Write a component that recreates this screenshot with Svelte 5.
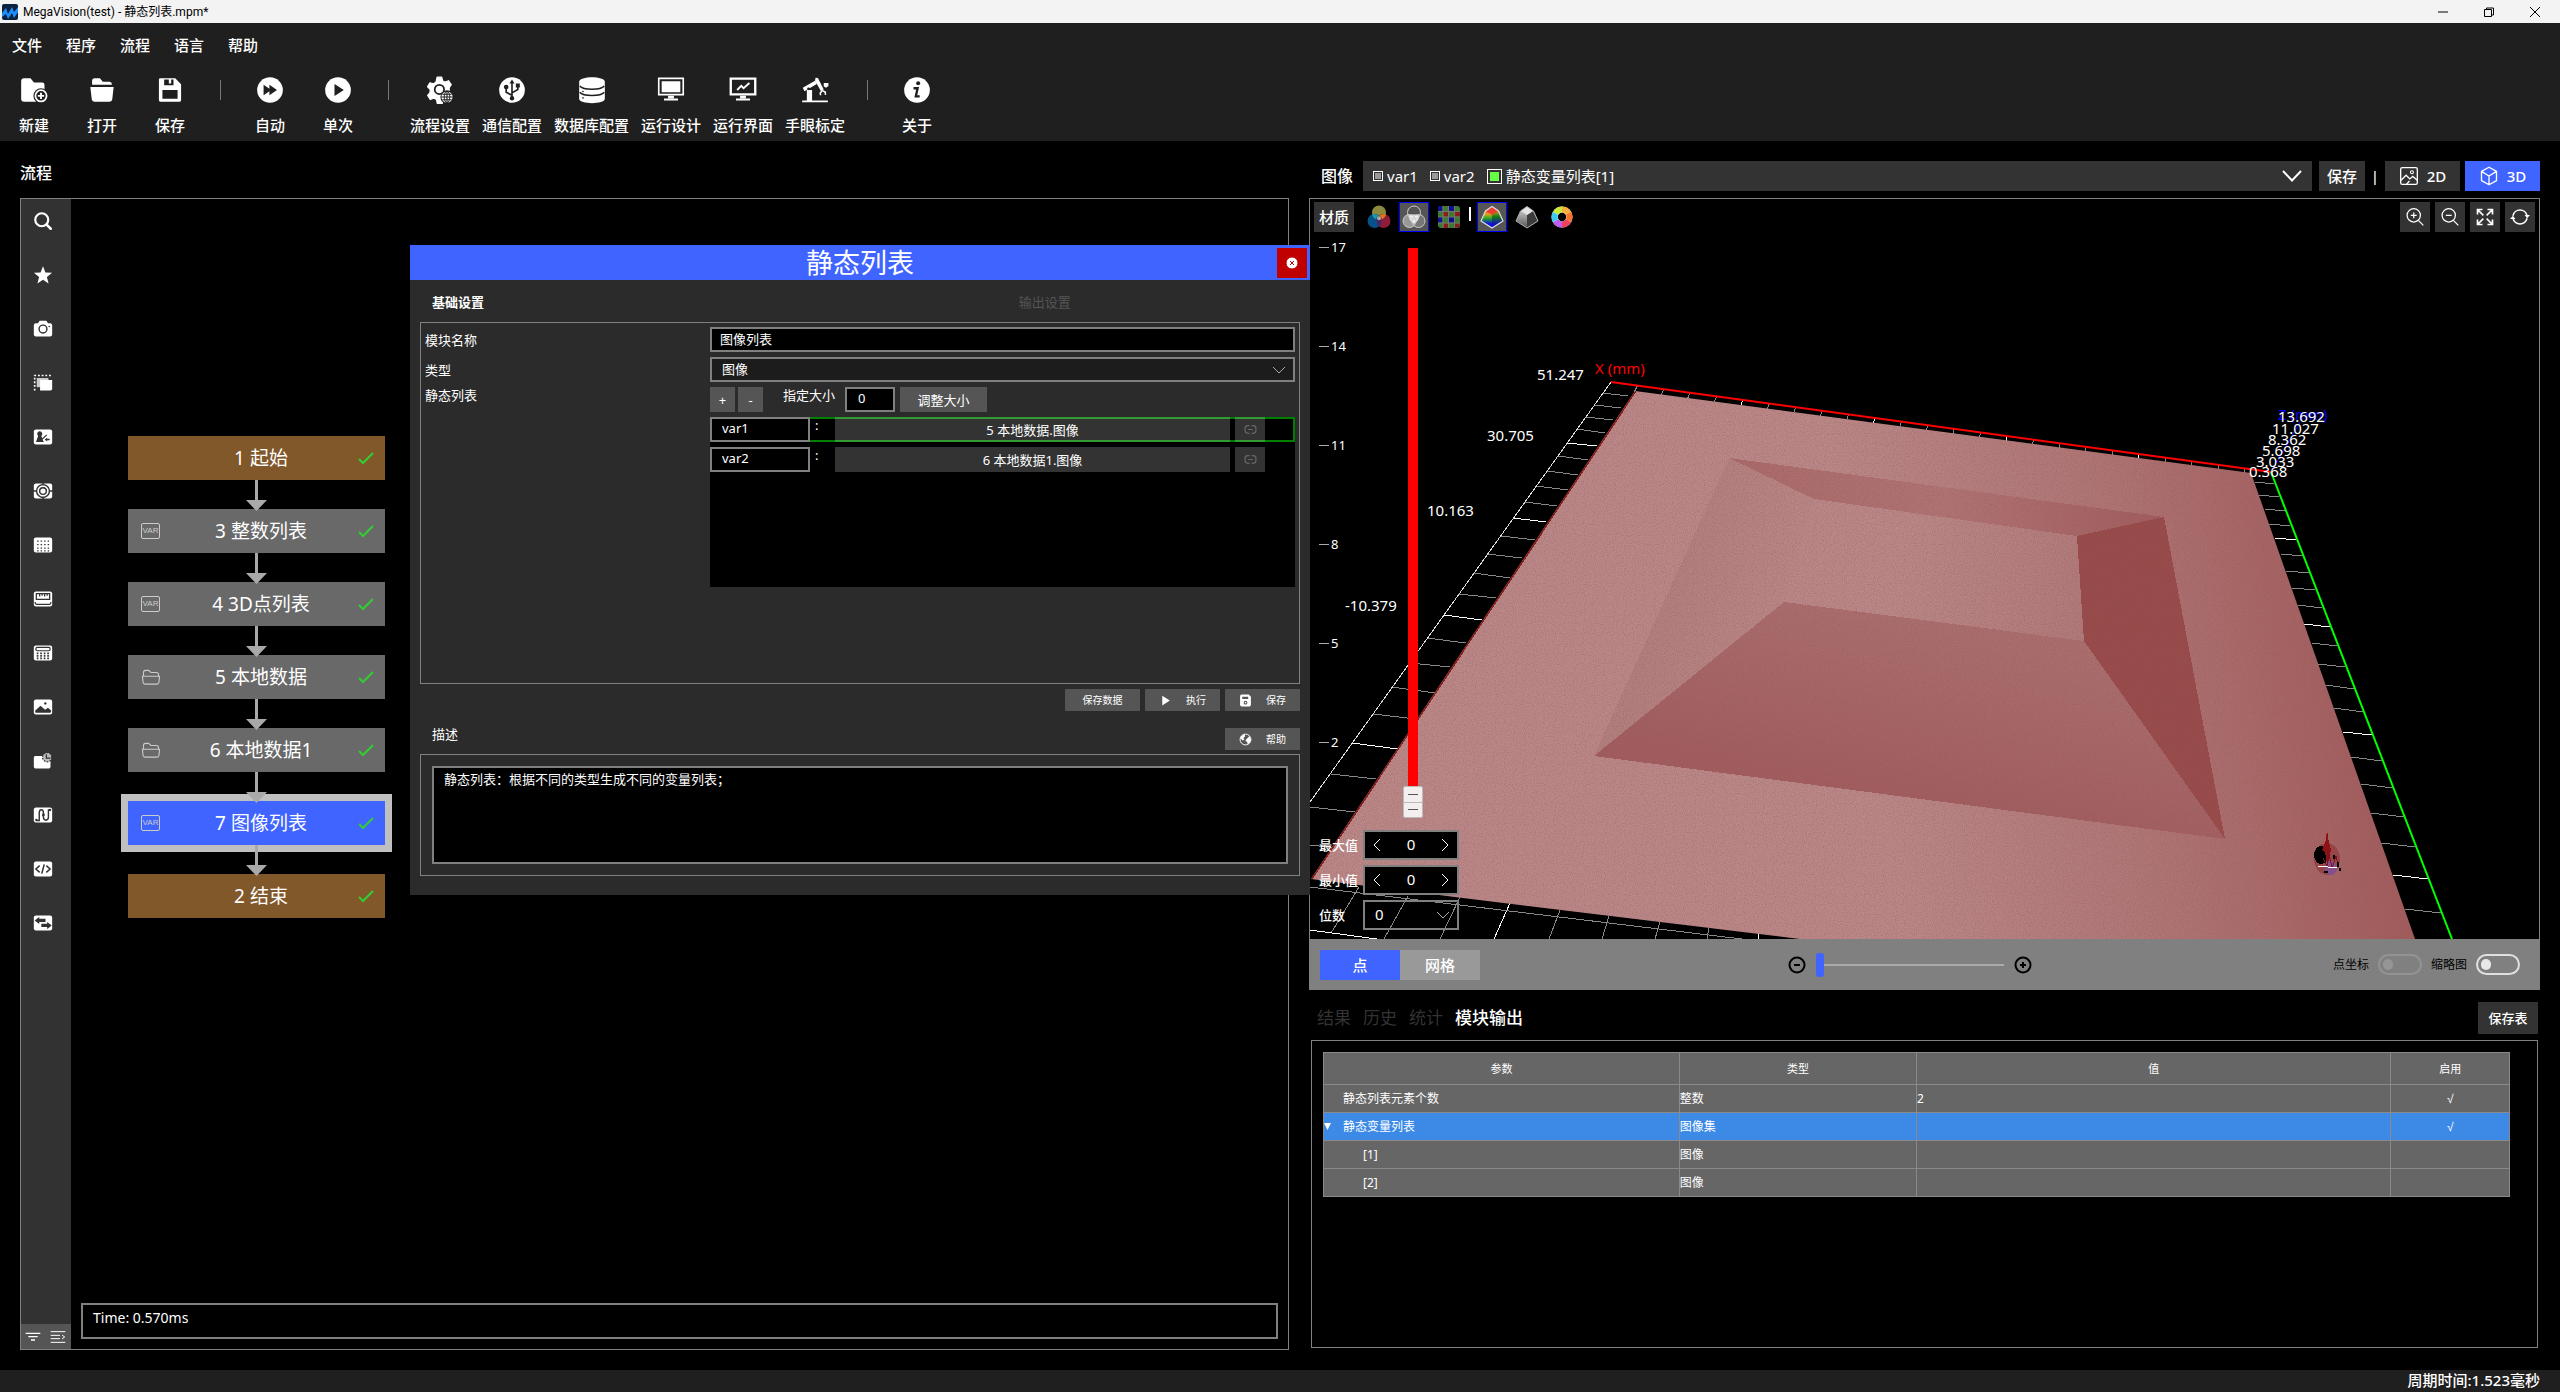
<script>
    // 24x24 glyphs, drawn with currentColor; darker details use the colour behind the icon
    const icons = {
        newProject: '<path fill="currentColor" d="M1 4.5A2.5 2.5 0 0 1 3.500 2H9l3 3.500h7a2 2 0 0 1 2 2V22H3.500A2.500 2.500 0 0 1 1 19.500z"/><circle cx="18" cy="17" r="6.500" fill="#1f1f1f"/><circle cx="18" cy="17" r="4.800" fill="none" stroke="currentColor" stroke-width="1.500"/><path stroke="currentColor" stroke-width="1.600" d="M18 14.300v5.400M15.300 17h5.400"/>',
        open: '<path fill="currentColor" d="M3.500 7.500V4.300A2.300 2.300 0 0 1 5.800 2h4.400l2.500 3H18a2.500 2.500 0 0 1 2.500 2.500zM2 9.500h20L20.800 20a2.200 2.200 0 0 1-2.200 2H5.400a2.200 2.200 0 0 1-2.200-2z"/>',
        save: '<path fill="currentColor" fill-rule="evenodd" d="M2.500 3.200A1.200 1.200 0 0 1 3.700 2h12.800l5 5v13.800a1.200 1.200 0 0 1-1.200 1.200H3.700a1.200 1.200 0 0 1-1.200-1.200zM7 3v5h8V3h-2v3.500h-2V3zM5.500 12v7.500h13V12z"/>',
        auto: '<circle cx="12" cy="12" r="11" fill="currentColor"/><path fill="#1f1f1f" d="M6.500 7.500v9l5-3.500v3.500L18 12l-6.500-4.500V11z"/>',
        once: '<circle cx="12" cy="12" r="11" fill="currentColor"/><path fill="#1f1f1f" d="M9 6.800v10.400L17 12z"/>',
        flowSet: '<path fill="currentColor" d="M9.500 1h4l.8 3.200 2 1 3-1.200 2.400 3.500-1.900 2.600.2 2.200-5.500 4-.5 7.200H9.600L9 20.200l-2.300-1.100-3.100 1.100-2.200-3.600 2.100-2.500v-2.600L1.300 9.300l2-3.500 3.300.9 2-1.600z" stroke="currentColor" stroke-linejoin="round"/><circle cx="11.500" cy="11.500" r="4" fill="none" stroke="#1f1f1f" stroke-width="1.500"/><circle cx="18" cy="18" r="5.700" fill="#1f1f1f"/><circle cx="18" cy="18" r="4.800" fill="currentColor"/><path fill="none" stroke="#1f1f1f" stroke-width=".9" d="M18 13v10M13 18h10M14 15.700h8M14 20.300h8"/><ellipse cx="18" cy="18" rx="2.400" ry="4.800" fill="none" stroke="#1f1f1f" stroke-width=".8"/>',
        usb: '<circle cx="12" cy="12" r="11" fill="currentColor"/><path fill="none" stroke="#1f1f1f" stroke-width="1.400" d="M12 5v14M12 16.500l-5-2.500v-3.500M12 14.500l5-3V8.500"/><path fill="#1f1f1f" d="M12 3l2.200 3.500H9.800zM15.300 6.500h3.400v3.400h-3.400z"/><circle cx="7" cy="9.500" r="2" fill="#1f1f1f"/><circle cx="12" cy="19" r="1.900" fill="#1f1f1f"/>',
        db: '<path fill="currentColor" d="M1 5c0-5.300 22-5.300 22 0v14.500c0 5-22 5-22 0z"/><path fill="none" stroke="#1f1f1f" stroke-width="1.300" d="M1.500 8.500c3 3.700 18 3.700 21 0M1.500 14c3 3.700 18 3.700 21 0"/><circle cx="4.300" cy="13.300" r=".7" fill="#1f1f1f"/><circle cx="4.300" cy="18.800" r=".7" fill="#1f1f1f"/>',
        monitor: '<path fill="none" stroke="currentColor" stroke-width="1.400" d="M1.500 2h21v14h-21z"/><path fill="currentColor" d="M4 4.500h16v9.500H4zM9.500 17h5v2h-5zM6 19.300h12v1.700H6z"/>',
        runView: '<path fill="none" stroke="currentColor" stroke-width="2" d="M1.500 2.200h21v13.600h-21z"/><path fill="none" stroke="currentColor" stroke-width="1.600" d="M7 12l3.500-3.500 2 2L17.500 6"/><path fill="currentColor" d="M9.500 17h5v2h-5zM6 19.300h12v1.700H6z"/>',
        robot: '<path fill="currentColor" d="M1 21h22v1.500H1zM5 12h4.500v9H5zM1.500 10L12 4l1.500 2.800L3 13zM12.500 1.500l2 .2 5 9.800-2.500 1.300-5-9zM19.500 6h4v2.500l-2 1.500-2-1z"/><path fill="none" stroke="currentColor" stroke-width="1.300" d="M18.300 12.500l-1.800 2 .3 2M18.300 12.500l2.500 1.200.2 2.500"/><circle cx="6.500" cy="11" r="1.200" fill="#1f1f1f"/>',
        about: '<circle cx="12" cy="12" r="11" fill="currentColor"/><circle cx="13" cy="6.300" r="1.700" fill="#1f1f1f"/><path fill="none" stroke="#1f1f1f" stroke-width="2" d="M9 10.500h3.500l-1.500 7h3.300"/>',
        search: '<circle cx="10.500" cy="10.500" r="7.800" fill="none" stroke="currentColor" stroke-width="2.600"/><path stroke="currentColor" stroke-width="3" stroke-linecap="round" d="M16.300 16.300l5 5"/>',
        star: '<path fill="currentColor" d="M12 1.500l2.900 7.500 8 .4-6.200 5 2 7.900L12 17.800l-6.700 4.500 2-7.900-6.200-5 8-.4z"/>',
        camera: '<path fill="currentColor" d="M1 7.500A2.500 2.500 0 0 1 3.500 5H6l2-3h8l2 3h2.500A2.500 2.500 0 0 1 23 7.500v11a2.500 2.500 0 0 1-2.500 2.500h-17A2.500 2.500 0 0 1 1 18.500z"/><circle cx="12" cy="12" r="4.700" fill="none" stroke="#323232" stroke-width="1.700"/><circle cx="19.500" cy="9" r="1" fill="#323232"/>',
        roi: '<path fill="none" stroke="currentColor" stroke-width="2" stroke-dasharray="2.200 2.200" d="M2 21V3h20"/><path fill="#ccc" d="M4.500 6h14v11h-14z"/><path fill="currentColor" d="M8.500 8.500H23V19a2 2 0 0 1-2 2H8.500z"/>',
        classify: '<rect x="1" y="3" width="22" height="18" rx="2.500" fill="currentColor"/><path fill="#323232" d="M8 5a3.300 3.300 0 0 1 2 5.800l1 2.700 5-4.500 1 1-5.500 5 1.500 3H3.500l2.700-7.200A3.300 3.300 0 0 1 8 5zM14 15l3-2.200V14h3v2h-3v1.500z"/>',
        target: '<rect x="1" y="3" width="22" height="18" rx="2.500" fill="currentColor"/><circle cx="12" cy="12" r="7.700" fill="none" stroke="#323232" stroke-width="1.700"/><circle cx="12" cy="12" r="4" fill="none" stroke="#323232" stroke-width="1.700"/><path stroke="#323232" stroke-width="1.700" d="M12 2v3M12 19v3M0 12h4.500M19.500 12H24"/>',
        grid: '<rect x="1" y="3" width="22" height="18" rx="2.500" fill="currentColor"/><path stroke="#323232" stroke-width="1.500" stroke-dasharray="1.700 2.500" d="M5 7.300h15M5 11.500h15M5 15.700h15M5 19h15"/>',
        ruler: '<rect x="1" y="3" width="22" height="18" rx="2.500" fill="currentColor"/><path fill="none" stroke="#323232" stroke-width="1.500" d="M4 5.500h16v7H4zM2.500 15.500c0 3 1 3 3 3h13c2 0 3 0 3-3M8 5v4M11 5v3M14 5v4M17 5v3"/>',
        calc: '<rect x="1" y="3" width="22" height="18" rx="2.500" fill="currentColor"/><rect x="3.500" y="5.300" width="17" height="4" rx="1.500" fill="none" stroke="#323232" stroke-width="1.400"/><path stroke="#323232" stroke-width="2" stroke-dasharray="2 2.200" d="M4.500 12.500h15M4.500 15.500h15M4.500 18.500h15"/>',
        picture: '<rect x="1" y="3" width="22" height="18" rx="2.500" fill="currentColor"/><path fill="#323232" d="M2.500 16.500l6.500-6 5.500 4.800L18 13l4 3.500-1 2.500H3z"/><circle cx="14.800" cy="7.700" r="1.400" fill="#323232"/>',
        timer: '<path fill="currentColor" d="M3.500 6H21v13a2 2 0 0 1-2 2H3a2 2 0 0 1-2-2V8a2 2 0 0 1 2.500-2z"/><circle cx="17" cy="7.500" r="5.500" fill="#bbb" stroke="#323232" stroke-width="1.500" stroke-dasharray="2 1.500"/><path fill="none" stroke="#323232" stroke-width="1.500" d="M16 4v4.500h5"/>',
        path: '<rect x="1" y="3" width="22" height="18" rx="2.500" fill="currentColor"/><path fill="none" stroke="#323232" stroke-width="1.700" d="M4 18.500h3.500V9.500c0-5 5-5 5 0v5c0 5 6 5 6 0V6h2"/><circle cx="12.500" cy="12" r="1.700" fill="#323232"/><circle cx="4" cy="18" r="1.400" fill="#323232"/><circle cx="20.500" cy="6" r="1.400" fill="#323232"/>',
        code: '<rect x="1" y="3" width="22" height="18" rx="2.500" fill="currentColor"/><path fill="none" stroke="#323232" stroke-width="1.800" d="M8 8l-4.500 4L8 16M16 8l4.500 4-4.500 4M13.500 6.500l-3 11"/>',
        swap: '<rect x="1" y="3" width="22" height="18" rx="2.500" fill="currentColor"/><path fill="#323232" d="M2 9l5.500-4.300V7H15v3.800H7.500v2.500zM22.500 15L17 10.700V13h-7v3.800h7v2.500z"/>',
        folder: '<path fill="none" stroke="currentColor" stroke-width="1.300" d="M3 11V6.500C3 5 4 4 5.500 4H9l3 2.500h6.500c1.500 0 2.500 1 2.500 2.500v2M1.700 11h20.600l-.8 7.500c-.2 1.200-1 2-2.300 2H4.800c-1.300 0-2.100-.8-2.300-2z"/>',
        filter: '<path stroke="currentColor" stroke-width="2" d="M1 6.500h22M5 11.500h14M9 16.500h6"/>',
        list: '<path fill="none" stroke="currentColor" stroke-width="1.500" d="M1 4h22M1 9.500h14M1 14.500h14M1 20h22M18 9l4 3-4 3"/>',
        zoomIn: '<circle cx="10.500" cy="10" r="8" fill="none" stroke="currentColor" stroke-width="1.500"/><path stroke="currentColor" stroke-width="1.500" d="M16 16l6 6M7 10h7M10.500 6.500v7"/>',
        zoomOut: '<circle cx="10.500" cy="10" r="8" fill="none" stroke="currentColor" stroke-width="1.500"/><path stroke="currentColor" stroke-width="1.500" d="M16 16l6 6M7 10h7"/>',
        fit: '<path fill="none" stroke="currentColor" stroke-width="2" d="M9 3H3v6M3 3l7 7M15 3h6v6M21 3l-7 7M9 21H3v-6M3 21l7-7M15 21h6v-6M21 21l-7-7"/>',
        rotate: '<path fill="none" stroke="currentColor" stroke-width="1.800" d="M3.500 10.500a8.700 8.700 0 0 1 17 0M20.500 13.500a8.700 8.700 0 0 1-17 0"/><path fill="currentColor" d="M17.500 9.500H24l-3.500 4zM6.500 14.500H0l3.500-4z"/>',
        image: '<rect x="2" y="2" width="20" height="20" rx="2" fill="none" stroke="currentColor" stroke-width="1.600"/><path fill="none" stroke="currentColor" stroke-width="1.600" d="M2.500 17l6-6 4.500 4.500 3.500-3 5.500 4.500M9 22l3.500-4"/><circle cx="15.500" cy="7.500" r="1.800" fill="none" stroke="currentColor" stroke-width="1.300"/>',
        cube: '<path fill="none" stroke="currentColor" stroke-width="1.600" stroke-linejoin="round" d="M12 1.500l9 5v11l-9 5-9-5v-11zM3 6.500l9 5.500 9-5.500M12 12v10.500"/>',
        play: '<path fill="currentColor" d="M6 3v18l14-9z"/>',
        disk: '<path fill="currentColor" fill-rule="evenodd" d="M2 4a3 3 0 0 1 3-3h13l4 4v15a3 3 0 0 1-3 3H5a3 3 0 0 1-3-3zM6 5v4h11V5z"/><circle cx="12" cy="16" r="2.500" fill="none" stroke="#555" stroke-width="2"/>',
        globe: '<circle cx="12" cy="12" r="10" fill="none" stroke="currentColor" stroke-width="1.800"/><path fill="currentColor" d="M3 7l7-5 1.500 4L8 9l2 3-3 2-4-4zM13 12l6-6 3 6-2 6-4 3-1-5-3-1z"/>',
        link: '<path fill="none" stroke="currentColor" stroke-width="2.200" d="M10 5H7a5 5 0 0 0-5 5v4a5 5 0 0 0 5 5h3M14 5h3a5 5 0 0 1 5 5v4a5 5 0 0 1-5 5h-3M7.500 12h9"/>',
        rgb: '<circle cx="12" cy="7.500" r="7" fill="#8c8a3c"/><circle cx="7.500" cy="16" r="7" fill="#0a5088"/><circle cx="16.500" cy="16" r="7" fill="#8c1c38"/><path fill="#1a9aa8" d="M5 9.300c2-.6 4.500.2 6.500 1.500-1.500 1.400-2.500 2.500-2.800 3.500C6.500 13 5.300 11 5 9.300z"/><path fill="#d87a1c" d="M19 9.300c-2-.6-4.500.2-6.500 1.500 1.500 1.400 2.500 2.500 2.800 3.500 2.200-1.300 3.400-3.300 3.700-5z"/><path fill="#3a2a70" d="M12 11.500c3 3 3 7 0 10-3-3-3-7 0-10z"/><circle cx="12" cy="13.200" r="2" fill="#aaa"/>',
        gray: '<circle cx="7.500" cy="16" r="6.500" fill="#999"/><circle cx="16.500" cy="16" r="6.500" fill="#777"/><path fill="#f0f0f0" d="M6.500 11c3-2 8-2 11 0-.8 3.500-2.500 6-5.500 8-3-2-4.700-4.500-5.500-8z"/><g fill="none" stroke="#ccc"><circle cx="12" cy="7.500" r="6.500"/><circle cx="7.500" cy="16" r="6.500"/><circle cx="16.500" cy="16" r="6.500"/></g>',
        texture: '<rect x="1" y="1" width="22" height="22" rx="3" fill="#3c7a32"/><path fill="#10108c" d="M1 1h4.500v5H1zM12 1h5v5h-5zM1 12h4.500v5.500H1zM12 12h5v5.500h-5z"/><path fill="#8c1c1c" d="M6.500 7h4.500v4.500H6.500zM18 7h5v4.500h-5zM6.500 18.500h4.500V23H6.500zM18 18.500h4.500v4H18z"/><path stroke="#777" stroke-width=".9" d="M6 1v22M11.500 1v22M17.500 1v22M1 6.500h22M1 12h22M1 18h22"/>',
        colorGem: '<defs><linearGradient id="gl" x2="0" y2="1"><stop offset=".1" stop-color="#f22"/><stop offset=".35" stop-color="#e8a020"/><stop offset=".55" stop-color="#2a2"/><stop offset=".8" stop-color="#11d"/></linearGradient><linearGradient id="gr" x2="0" y2="1"><stop offset="0" stop-color="#b8a010"/><stop offset=".35" stop-color="#187818"/><stop offset=".8" stop-color="#1010c0"/></linearGradient></defs><path fill="url(#gl)" d="M12 1.500L18.500 6 23 16l-11 7L1 16 5.500 6z"/><path fill="url(#gr)" d="M12 10v12.500L22.500 16 18 6z"/><path fill="#e84030" d="M12 2l6 4-6 4-6-4z"/><path fill="none" stroke="#ddd" stroke-width="1.200" d="M12 1.500L18.500 6 23 16l-11 7L1 16 5.500 6z"/>',
        grayGem: '<defs><linearGradient id="dl" x2="0" y2="1"><stop offset="0" stop-color="#ddd"/><stop offset="1" stop-color="#555"/></linearGradient></defs><path fill="url(#dl)" d="M12 1.500L18.500 6 23 16l-11 7L1 16 5.500 6z"/><path fill="#3c3c3c" d="M12 10v12.500L22.500 16 18 6z"/><path fill="#e4e4e4" d="M12 2l6 4-6 4-6-4z"/><path fill="none" stroke="#aaa" d="M12 1.500L18.500 6 23 16l-11 7L1 16 5.500 6z"/>',
        wheel: '<circle cx="12" cy="12" r="10.500" fill="#fff"/><g fill="none" stroke-width="6"><path stroke="#f7b03c" d="M12 4.500A7.500 7.500 0 0 1 18.500 8.300"/><path stroke="#f7742c" d="M18.500 8.300A7.500 7.500 0 0 1 18.500 15.700"/><path stroke="#f0425c" d="M18.500 15.700A7.500 7.500 0 0 1 12 19.500"/><path stroke="#c05cf0" d="M12 19.500A7.500 7.500 0 0 1 5.500 15.700"/><path stroke="#3cc8f0" d="M5.500 15.700A7.500 7.500 0 0 1 5.500 8.300"/><path stroke="#c8e83c" d="M5.500 8.300A7.500 7.500 0 0 1 12 4.500"/></g><circle cx="12" cy="12" r="4.200" fill="#000"/>'
    };

    const menus = ['文件', '程序', '流程', '语言', '帮助'];

    const toolGroups = [
        [['新建', 'newProject'], ['打开', 'open'], ['保存', 'save']],
        [['自动', 'auto'], ['单次', 'once']],
        [['流程设置', 'flowSet'], ['通信配置', 'usb'], ['数据库配置', 'db'], ['运行设计', 'monitor'], ['运行界面', 'runView'], ['手眼标定', 'robot']],
        [['关于', 'about']]
    ];

    const sideTools = [
        ['搜索', 'search'], ['收藏', 'star'], ['相机', 'camera'], ['区域', 'roi'], ['分类', 'classify'],
        ['定位', 'target'], ['标定', 'grid'], ['测量', 'ruler'], ['计算', 'calc'], ['图像', 'picture'],
        ['延时', 'timer'], ['路径', 'path'], ['脚本', 'code'], ['通信', 'swap']
    ];

    const nodes = [
        { id: 1, name: '起始', kind: 'end' },
        { id: 3, name: '整数列表', kind: 'var' },
        { id: 4, name: '3D点列表', kind: 'var' },
        { id: 5, name: '本地数据', kind: 'folder' },
        { id: 6, name: '本地数据1', kind: 'folder' },
        { id: 7, name: '图像列表', kind: 'var' },
        { id: 2, name: '结束', kind: 'end' }
    ];
    let selectedNode = 7;

    let moduleName = '图像列表';
    let listSize = 0;
    let listItems = [
        { name: 'var1', source: '5 本地数据.图像' },
        { name: 'var2', source: '6 本地数据1.图像' }
    ];
    let selectedItem = 0;
    let dialogTab = 0;
    let dialogOpen = true;

    let sources = [
        { name: 'var1', on: false },
        { name: 'var2', on: false },
        { name: '静态变量列表[1]', on: true }
    ];

    let maxValue = 0;
    let minValue = 0;
    let drawMode = '点';
    const heights = [17, 14, 11, 8, 5, 2];

    const resultTabs = ['结果', '历史', '统计', '模块输出'];
    let resultTab = '模块输出';
    const outputs = [
        { name: '静态列表元素个数', type: '整数', value: '2', used: true, level: 1 },
        { name: '静态变量列表', type: '图像集', value: '', used: true, level: 1, open: true },
        { name: '[1]', type: '图像', value: '', used: false, level: 2 },
        { name: '[2]', type: '图像', value: '', used: false, level: 2 }
    ];
    let selectedRow = 1;

    // ruler ticks of the 3D view: x1, y1, x2, y2, every fifth one is bright
    const leftTicks = [
        [1603, 393, 1628, 396], [1595, 405, 1621, 408], [1586, 417, 1613, 420], [1577, 429, 1605, 433],
        [1567, 443, 1597, 446], [1558, 456, 1588, 460], [1547, 471, 1578, 475], [1536, 486, 1568, 490],
        [1525, 502, 1557, 506], [1513, 518, 1546, 522], [1501, 536, 1535, 540], [1487, 554, 1522, 558],
        [1474, 573, 1510, 578], [1459, 594, 1496, 598], [1444, 615, 1482, 620], [1427, 638, 1466, 643],
        [1410, 663, 1450, 667], [1392, 687, 1435, 693], [1373, 714, 1416, 719], [1352, 743, 1398, 749],
        [1331, 774, 1376, 779], [1310, 807, 1355, 812], [1310, 845, 1337, 848]
    ];
    const rightTicks = [
        [2255, 482, 2274, 484], [2259, 495, 2279, 497], [2265, 509, 2285, 511], [2269, 524, 2290, 526],
        [2275, 538, 2296, 540], [2281, 554, 2303, 556], [2286, 571, 2309, 573], [2292, 588, 2315, 590],
        [2298, 605, 2322, 608], [2304, 624, 2330, 627], [2312, 643, 2337, 646], [2318, 664, 2345, 667],
        [2326, 685, 2354, 689], [2334, 708, 2363, 712], [2343, 732, 2372, 735], [2351, 757, 2382, 761],
        [2361, 784, 2393, 788], [2371, 813, 2404, 817], [2381, 843, 2415, 847], [2393, 875, 2428, 879],
        [2405, 909, 2441, 913]
    ];
    const bottomTicks = [
        [1359, 887, 1331, 933], [1408, 896, 1384, 939], [1460, 897, 1440, 939], [1510, 903, 1494, 939],
        [1560, 910, 1549, 939], [1609, 916, 1602, 939], [1660, 922, 1655, 939], [1709, 928, 1707, 939], [1759, 933, 1758, 939]
    ];
    const topTicks = Array.from({ length: 24 }, (_, k) => {
        const x = 1611 + (k + 1) * 26.4;
        const y = 382 + (x - 1611) * 90 / 660;
        return [x, y, x - 3 + k / 8, y + 6];
    });

    const axisLabels = [
        ['51.247', 1537, 380], ['30.705', 1487, 441], ['10.163', 1427, 516], ['-10.379', 1345, 611],
        ['13.692', 2278, 422], ['11.027', 2272, 434], ['8.362', 2268, 445],
        ['5.698', 2262, 456], ['3.033', 2256, 467], ['0.368', 2249, 477]
    ];
</script>

<div class="app">
    <header class="titlebar">
        <svg class="logo" viewBox="0 0 16 16" aria-hidden="true">
            <rect width="16" height="16" rx="2" fill="#0b2340"/>
            <path fill="#1f8fff" d="M0 9l4-5 2 6 4-7 2 5 4-5v5l-4 6-2-5-4 6-2-5-4 3z"/>
        </svg>
        <span>MegaVision(test) - 静态列表.mpm*</span>
        <div class="win_btns">
            <button aria-label="最小化"><svg viewBox="0 0 12 12"><path d="M1 6h10"/></svg></button>
            <button aria-label="还原"><svg viewBox="0 0 12 12"><path d="M1.500 3.500h7v7h-7zM3.500 3.500v-1.500h7v7h-2"/></svg></button>
            <button aria-label="关闭"><svg viewBox="0 0 12 12"><path d="M1 1l10 10M11 1L1 11"/></svg></button>
        </div>
    </header>

    <div class="topbar">
        <nav class="menus">
            {#each menus as m}
                <button>{m}</button>
            {/each}
        </nav>
        <div class="tools">
            {#each toolGroups as group, i}
                {#if i > 0}
                    <span class="sep"></span>
                {/if}
                <div class="tool_group" class:wide={group.length > 4}>
                    {#each group as t}
                        <button>
                            <svg viewBox="0 0 24 24" aria-hidden="true">{@html icons[t[1]]}</svg>
                            <span>{t[0]}</span>
                        </button>
                    {/each}
                </div>
            {/each}
        </div>
    </div>

    <main>
        <section class="flow">
            <h2>流程</h2>
            <div class="flow_box">
                <div class="side">
                    <div class="side_tools">
                        {#each sideTools as s}
                            <button aria-label={s[0]}><svg viewBox="0 0 24 24">{@html icons[s[1]]}</svg></button>
                        {/each}
                    </div>
                    <div class="side_foot">
                        <button aria-label="筛选"><svg viewBox="0 0 24 24">{@html icons.filter}</svg></button>
                        <button aria-label="展开"><svg viewBox="0 0 24 24">{@html icons.list}</svg></button>
                    </div>
                </div>
                <div class="canvas">
                    <div class="nodes">
                        {#each nodes as n, i}
                            {#if i > 0}
                                <svg class="arrow" viewBox="0 0 21 31" aria-hidden="true"><path d="M9 0h3v20h9L10.500 31 0 20h9z"/></svg>
                            {/if}
                            <button class="node {n.kind}" class:selected={selectedNode === n.id} on:click={() => selectedNode = n.id}>
                                <span class="node_icon">
                                    {#if n.kind === 'var'}
                                        <span class="var_tag">VAR</span>
                                    {:else if n.kind === 'folder'}
                                        <svg viewBox="0 0 24 24">{@html icons.folder}</svg>
                                    {/if}
                                </span>
                                <span class="node_name">{n.id} {n.name}</span>
                                <svg class="check" viewBox="0 0 16 14"><path d="M1 8l4 4L15 2"/></svg>
                            </button>
                        {/each}
                    </div>
                    <div class="log">Time: 0.570ms</div>
                </div>
            </div>
        </section>

        <section class="view">
            <div class="view_head">
                <h2>图像</h2>
                <div class="combo">
                    {#each sources as s}
                        <label class:big={s.on}><input type="checkbox" bind:checked={s.on}/>{s.name}</label>
                    {/each}
                    <button class="drop" aria-label="选择图像"><svg viewBox="0 0 20 12"><path d="M1 1l9 9.500L19 1"/></svg></button>
                </div>
                <button class="dark_btn">保存</button>
                <span class="bar">|</span>
                <button class="dark_btn mode"><svg viewBox="0 0 24 24">{@html icons.image}</svg>2D</button>
                <button class="dark_btn mode active"><svg viewBox="0 0 24 24">{@html icons.cube}</svg>3D</button>
            </div>

            <div class="viewer">
                <div class="scene">
                    <svg class="scene_3d" viewBox="1310 199 1229 740" preserveAspectRatio="xMinYMin slice">
                        <defs>
                            <linearGradient id="plane" gradientUnits="userSpaceOnUse" x1="1860" y1="640" x2="2370" y2="560">
                                <stop offset="0" stop-color="#ba8888"/>
                                <stop offset=".45" stop-color="#b07878"/>
                                <stop offset="1" stop-color="#a05a5a"/>
                            </linearGradient>
                            <linearGradient id="wall" gradientUnits="userSpaceOnUse" x1="1660" y1="600" x2="1790" y2="640">
                                <stop offset="0" stop-color="#b27f7f"/>
                                <stop offset="1" stop-color="#ba8888"/>
                            </linearGradient>
                            <linearGradient id="floor" gradientUnits="userSpaceOnUse" x1="1900" y1="560" x2="2090" y2="600">
                                <stop offset="0" stop-color="#ba8888"/>
                                <stop offset="1" stop-color="#b07a7a"/>
                            </linearGradient>
                            <linearGradient id="front" gradientUnits="userSpaceOnUse" x1="1900" y1="620" x2="1860" y2="800">
                                <stop offset="0" stop-color="#aa6e6e"/>
                                <stop offset="1" stop-color="#a05c5e"/>
                            </linearGradient>
                            <linearGradient id="back" x2="1">
                                <stop offset="0" stop-color="#a96a6a"/>
                                <stop offset=".5" stop-color="#b07474"/>
                                <stop offset="1" stop-color="#a05c5e"/>
                            </linearGradient>
                            <clipPath id="surface"><path d="M1635 391L2251 473 2415 939H1800L1455 897 1311 879z"/></clipPath>
                            <filter id="grain" x="0" y="0" width="100%" height="100%" color-interpolation-filters="sRGB">
                                <feTurbulence type="fractalNoise" baseFrequency=".9" numOctaves="1" seed="4"/>
                                <feColorMatrix values="0 0 0 0 .58  0 0 0 0 .32  0 0 0 0 .32  1 0 0 0 -.42"/>
                            </filter>
                        </defs>

                        {#each [leftTicks, rightTicks, bottomTicks, topTicks] as ticks, g}
                            {#each ticks as t, k}
                                <line x1={t[0]} y1={t[1]} x2={t[2]} y2={t[3]} stroke={(g === 2 ? k === 3 || k === 8 : k % 5 === 4) ? '#fff' : '#888'}/>
                            {/each}
                        {/each}
                        <path d="M1611 382L1310 802" stroke="#ddd"/>
                        <path d="M1310 887L1742 939" stroke="#888"/>
                        <path d="M1310 930L1384 940" stroke="#fff"/>

                        <g clip-path="url(#surface)">
                            <path fill="url(#plane)" d="M1300 380h1130v570H1300z"/>
                            <path fill="url(#wall)" d="M1729 458L1814 499 1784 602 1594 756z"/>
                            <path fill="url(#back)" d="M1729 458L2164 517 2077 536 1814 499z"/>
                            <path fill="url(#floor)" d="M1814 499L2077 536 2084 641 1784 602z"/>
                            <path fill="#974a4a" d="M2164 517L2225 839 2084 641 2077 536z"/>
                            <path fill="url(#front)" d="M1784 602L2084 641 2225 839 1594 756z"/>
                            <rect x="1310" y="380" width="1120" height="560" filter="url(#grain)"/>
                            <path d="M1635 391L1311 879" stroke="#8c1c1c" stroke-width="3"/>
                        </g>

                        <ellipse cx="2327" cy="859" rx="13" ry="16" fill="#964646"/>
                        <ellipse cx="2321" cy="855" rx="7" ry="9" fill="#000"/>
                        <path fill="#8c1216" d="M2327 828l1 10 3 12-2 10-2 4-2-12-3-2 4-10z"/>
                        <ellipse cx="2331" cy="868" rx="6" ry="7" fill="#85508c"/>
                        <path d="M2323 858l4 8 2-12 3 14 4-12 2 8" fill="none" stroke="#7a1420"/>
                        <path d="M2318 866l19 2" stroke="#fff"/>
                        <path d="M2334 855v4M2338 862v5M2324 872h4M2340 868v3" stroke="#000" stroke-width="2"/>

                        <path class="axis_line" d="M1611 382L2271 472" stroke="#f00"/>
                        <path class="axis_line" d="M2271 472L2452 939" stroke="#0f0"/>
                        <path d="M2271 472L2300 422" stroke="#00f"/>
                        <text class="axis_x" x="1595" y="374">X (mm)</text>
                        <text class="axis_z" x="2278" y="420">Z (mm)</text>
                        {#each axisLabels as a}
                            <text x={a[1]} y={a[2]}>{a[0]}</text>
                        {/each}
                    </svg>

                    <div class="scene_bar">
                        <button class="dark_btn material">材质</button>
                        <button class="pick" aria-label="彩色"><svg viewBox="0 0 24 24">{@html icons.rgb}</svg></button>
                        <button class="pick on" aria-label="灰度"><svg viewBox="0 0 24 24">{@html icons.gray}</svg></button>
                        <button class="pick" aria-label="纹理"><svg viewBox="0 0 24 24">{@html icons.texture}</svg></button>
                        <span class="pick_sep"></span>
                        <button class="pick on" aria-label="伪彩"><svg viewBox="0 0 24 24">{@html icons.colorGem}</svg></button>
                        <button class="pick" aria-label="灰阶"><svg viewBox="0 0 24 24">{@html icons.grayGem}</svg></button>
                        <button class="pick" aria-label="色轮"><svg viewBox="0 0 24 24">{@html icons.wheel}</svg></button>
                        <span class="grow"></span>
                        <button class="dark_btn square" aria-label="放大"><svg viewBox="0 0 24 24">{@html icons.zoomIn}</svg></button>
                        <button class="dark_btn square" aria-label="缩小"><svg viewBox="0 0 24 24">{@html icons.zoomOut}</svg></button>
                        <button class="dark_btn square" aria-label="适应窗口"><svg viewBox="0 0 24 24">{@html icons.fit}</svg></button>
                        <button class="dark_btn square" aria-label="重置视角"><svg viewBox="0 0 24 24">{@html icons.rotate}</svg></button>
                    </div>

                    <div class="height_row">
                        <ul>
                            {#each heights as h}
                                <li>{h}</li>
                            {/each}
                        </ul>
                        <div class="height_slider">
                            <input class="low" type="range" min="0" max="17" value="0" aria-label="高度下限"/>
                            <input class="high" type="range" min="0" max="17" value="0" aria-label="高度上限"/>
                        </div>
                    </div>

                    <div class="limits">
                        <label for="max_value">最大值</label>
                        <div class="spin">
                            <button aria-label="减小最大值" on:click={() => maxValue -= 1}><svg viewBox="0 0 8 14"><path d="M7 1L1 7l6 6"/></svg></button>
                            <input id="max_value" type="text" bind:value={maxValue}/>
                            <button aria-label="增大最大值" on:click={() => maxValue += 1}><svg viewBox="0 0 8 14"><path d="M1 1l6 6-6 6"/></svg></button>
                        </div>
                        <label for="min_value">最小值</label>
                        <div class="spin">
                            <button aria-label="减小最小值" on:click={() => minValue -= 1}><svg viewBox="0 0 8 14"><path d="M7 1L1 7l6 6"/></svg></button>
                            <input id="min_value" type="text" bind:value={minValue}/>
                            <button aria-label="增大最小值" on:click={() => minValue += 1}><svg viewBox="0 0 8 14"><path d="M1 1l6 6-6 6"/></svg></button>
                        </div>
                        <label for="digits">位数</label>
                        <div class="select_box digits">
                            <select id="digits"><option>0</option><option>1</option><option>2</option></select>
                            <svg viewBox="0 0 12 8"><path d="M0 1l6 6 6-6"/></svg>
                        </div>
                    </div>
                </div>

                <div class="draw_bar">
                    <div class="draw_modes">
                        {#each ['点', '网格'] as m}
                            <button class:active={drawMode === m} on:click={() => drawMode = m}>{m}</button>
                        {/each}
                    </div>
                    <div class="size_row">
                        <svg viewBox="0 0 18 18"><circle cx="9" cy="9" r="7.500"/><path d="M6 9h6"/></svg>
                        <input type="range" min="1" max="20" value="1" aria-label="点大小"/>
                        <svg viewBox="0 0 18 18"><circle cx="9" cy="9" r="7.500"/><path d="M6 9h6M9 6v6"/></svg>
                    </div>
                    <div class="switches">
                        <label>点坐标<input type="checkbox" disabled/></label>
                        <label>缩略图<input type="checkbox"/></label>
                    </div>
                </div>
            </div>

            <div class="result_head">
                {#each resultTabs as t}
                    <button class:active={resultTab === t} on:click={() => resultTab = t}>{t}</button>
                {/each}
                <button class="dark_btn save_table">保存表</button>
            </div>
            <div class="result_box">
                <table>
                    <colgroup><col class="c_name"/><col class="c_type"/><col/><col class="c_used"/></colgroup>
                    <thead>
                        <tr><th>参数</th><th>类型</th><th>值</th><th>启用</th></tr>
                    </thead>
                    <tbody>
                        {#each outputs as o, i}
                            <tr class:selected={selectedRow === i} on:click={() => selectedRow = i}>
                                <td class="level_{o.level}">{#if o.open}<svg class="twisty" viewBox="0 0 7 7"><path d="M0 0h7L3.500 7z"/></svg>{/if}{o.name}</td>
                                <td>{o.type}</td>
                                <td>{o.value}</td>
                                <td class="used">{o.used ? '√' : ''}</td>
                            </tr>
                        {/each}
                    </tbody>
                </table>
            </div>
        </section>
    </main>

    <footer>周期时间:1.523毫秒</footer>

    {#if dialogOpen}
        <div class="dialog" role="dialog" aria-label="静态列表">
            <div class="dialog_head">
                <h1>静态列表</h1>
                <button aria-label="关闭对话框" on:click={() => dialogOpen = false}>
                    <svg viewBox="0 0 12 12"><circle cx="6" cy="6" r="6"/><path d="M4 4l4 4M8 4L4 8"/></svg>
                </button>
            </div>
            <div class="dialog_body">
                <div class="dialog_tabs">
                    {#each ['基础设置', '输出设置'] as t, i}
                        <button class:active={dialogTab === i} on:click={() => dialogTab = i}>{t}</button>
                    {/each}
                </div>

                <div class="frame form">
                    <label for="module_name">模块名称</label>
                    <input id="module_name" class="field" type="text" bind:value={moduleName}/>

                    <label for="list_type">类型</label>
                    <div class="select_box">
                        <select id="list_type"><option>图像</option><option>整数</option><option>3D点</option></select>
                        <svg viewBox="0 0 12 8"><path d="M0 1l6 6 6-6"/></svg>
                    </div>

                    <span class="label_top">静态列表</span>
                    <div class="size_tools">
                        <button>+</button>
                        <button>-</button>
                        <label class="label_top" for="list_size">指定大小</label>
                        <input id="list_size" class="field" type="text" bind:value={listSize}/>
                        <button class="resize">调整大小</button>
                    </div>

                    <ul class="items">
                        {#each listItems as item, i}
                            <li class:selected={selectedItem === i}>
                                <input class="field" type="text" aria-label="变量名" bind:value={item.name} on:focus={() => selectedItem = i}/>
                                <span>:</span>
                                <button class="source">{item.source}</button>
                                <button class="link" aria-label="链接"><svg viewBox="0 0 24 24">{@html icons.link}</svg></button>
                            </li>
                        {/each}
                    </ul>
                </div>

                <div class="actions">
                    <button>保存数据</button>
                    <button><svg viewBox="0 0 24 24">{@html icons.play}</svg>执行</button>
                    <button><svg viewBox="0 0 24 24">{@html icons.disk}</svg>保存</button>
                </div>

                <div class="desc_head">
                    <label for="desc">描述</label>
                    <div class="actions">
                        <button><svg viewBox="0 0 24 24">{@html icons.globe}</svg>帮助</button>
                    </div>
                </div>
                <div class="frame desc">
                    <textarea id="desc" readonly>静态列表：根据不同的类型生成不同的变量列表；</textarea>
                </div>
            </div>
        </div>
    {/if}
</div>

<style>
    :global(body){
        background-color: black;
        overflow: hidden;
    }
    .app{
        position: relative;
        display: flex;
        flex-direction: column;
        height: 100vh;
        color: white;
        font-family: "Noto Sans", "Noto Sans CJK SC", sans-serif;
        font-size: 15px;
        line-height: 20px;
    }
    .app *{
        box-sizing: border-box;
    }
    button, input, select, textarea{
        font: inherit;
        color: inherit;
        border: none;
        border-radius: 0px;
        background: none;
        padding: 0px;
        margin: 0px;
        outline: none;
    }
    h1, h2, ul{
        margin: 0px;
        padding: 0px;
        font-weight: normal;
        list-style: none;
    }
    svg{
        display: block;
        flex: none;
    }

    .titlebar{
        display: flex;
        align-items: center;
        height: 23px;
        padding: 0px 2px;
        background-color: #f3f3f3;
        color: black;
        font-family: Roboto, "Noto Sans CJK SC", sans-serif;
        font-size: 12px;
    }
    .logo{
        width: 16px;
        height: 16px;
        margin-right: 5px;
    }
    .win_btns{
        display: flex;
        margin-left: auto;
    }
    .win_btns button{
        display: grid;
        place-items: center;
        width: 46px;
        height: 20px;
    }
    .win_btns svg{
        width: 12px;
        height: 12px;
        fill: none;
        stroke: black;
    }

    .topbar{
        background-color: #1f1f1f;
        padding: 12px 0px 5px;
        font-weight: 500;
    }
    .menus{
        display: flex;
        gap: 24px;
        padding-left: 12px;
    }
    .tools{
        display: flex;
        align-items: flex-start;
        padding-top: 21px;
    }
    .tool_group{
        display: flex;
    }
    .tool_group button{
        display: flex;
        flex-direction: column;
        align-items: center;
        gap: 10px;
        min-width: 68px;
        line-height: 22px;
        white-space: nowrap;
    }
    .tool_group.wide button{
        padding: 0px 6px;
    }
    .tool_group svg{
        width: 28px;
        height: 28px;
    }
    .sep{
        width: 1px;
        height: 20px;
        margin: 4px 15px 0px 16px;
        background-color: #777;
    }

    main{
        flex: 1;
        min-height: 0px;
        display: grid;
        grid-template-columns: minmax(0, 1269fr) minmax(0, 1231fr);
        gap: 20px;
        padding: 20px 20px;
    }
    h2{
        font-size: 16px;
        font-weight: 500;
        line-height: 24px;
    }
    .flow{
        display: flex;
        flex-direction: column;
        gap: 13px;
    }
    .flow_box{
        flex: 1;
        display: flex;
        border: 1px solid #808080;
    }
    .side{
        display: flex;
        flex-direction: column;
        justify-content: space-between;
        width: 50px;
        background-color: #323232;
    }
    .side_tools{
        display: flex;
        flex-direction: column;
        gap: 10px;
    }
    .side_tools button{
        height: 44px;
        padding: 0px 12px;
    }
    .side_tools svg{
        width: 20px;
        height: 20px;
    }
    .side_foot{
        display: flex;
        justify-content: space-between;
        padding: 2px 5px 2px 4px;
        height: 25px;
        background-color: #555;
    }
    .side_foot svg{
        width: 16px;
        height: 16px;
    }
    .canvas{
        flex: 1;
        display: flex;
        flex-direction: column;
        justify-content: space-between;
        padding: 237px 10px 10px;
    }
    .nodes{
        display: flex;
        flex-direction: column;
        width: 257px;
        margin-left: 47px;
    }
    .node{
        display: flex;
        align-items: center;
        height: 44px;
        padding: 0px 11px 0px 13px;
        background-color: #696969;
        font-size: 19px;
    }
    .node.end{
        background-color: #81582a;
    }
    .node.selected{
        background-color: #4064ff;
        box-shadow: 0 0 0 7px silver;
    }
    .node_icon{
        width: 19px;
        color: #ccc;
    }
    .node_icon svg{
        width: 20px;
        height: 20px;
    }
    .var_tag{
        display: block;
        border: 1px solid #ccc;
        border-radius: 2px;
        font-family: "Liberation Sans", sans-serif;
        font-size: 8px;
        line-height: 14px;
        text-align: center;
    }
    .node_name{
        flex: 1;
        padding-left: 4px;
        text-align: center;
    }
    .check{
        width: 16px;
        height: 14px;
        fill: none;
        stroke: #32cd32;
        stroke-width: 2;
    }
    .arrow{
        z-index: 1;
        width: 21px;
        height: 31px;
        margin: 0px auto -2px;
        fill: #a9a9a9;
    }
    .log{
        height: 36px;
        padding: 3px 10px;
        border: 2px solid #808080;
        font-size: 14px;
    }

    .view{
        display: flex;
        flex-direction: column;
        padding-bottom: 2px;
    }
    .view_head{
        display: flex;
        align-items: center;
        height: 30px;
        margin-bottom: 7px;
        font-weight: 500;
    }
    .view_head h2{
        padding: 0px 10px 0px 12px;
    }
    .dark_btn{
        display: flex;
        align-items: center;
        justify-content: center;
        height: 30px;
        background-color: #333;
        font-weight: 500;
    }
    .dark_btn svg{
        width: 20px;
        height: 20px;
    }
    .combo{
        flex: 1;
        display: flex;
        align-items: center;
        gap: 12px;
        height: 30px;
        padding: 0px 10px;
        margin-right: 7px;
        background-color: #333;
        font-weight: normal;
    }
    .combo label{
        display: flex;
        align-items: center;
        gap: 4px;
    }
    .combo input{
        appearance: none;
        width: 10px;
        height: 10px;
        border: 1px solid white;
        background-color: #999;
        background-clip: content-box;
        padding: 1px;
    }
    .combo .big input{
        width: 15px;
        height: 15px;
        background-color: #6f4;
        padding: 2px;
    }
    .combo .drop{
        margin-left: auto;
    }
    .drop svg{
        width: 20px;
        height: 12px;
        fill: none;
        stroke: white;
        stroke-width: 2;
    }
    .view_head > .dark_btn{
        padding: 0px 8px;
    }
    .view_head .bar{
        width: 20px;
        text-align: center;
    }
    .view_head > .mode{
        width: 75px;
        gap: 8px;
    }
    .mode + .mode{
        margin-left: 5px;
    }
    .dark_btn.active{
        background-color: #4064ff;
    }

    .viewer{
        flex: 792;
        min-height: 0px;
        display: flex;
        flex-direction: column;
    }
    .scene{
        position: relative;
        flex: 1;
        min-height: 0px;
        display: flex;
        flex-direction: column;
        border: 1px solid #808080;
        border-bottom: none;
    }
    .scene_3d{
        position: absolute;
        top: 0px;
        left: 0px;
        width: 100%;
        height: 100%;
        shape-rendering: crispEdges;
    }
    .axis_line{
        shape-rendering: auto;
        stroke-width: 2;
    }
    .scene_3d text{
        fill: white;
        font-size: 15px;
    }
    .scene_3d .axis_x{
        fill: red;
    }
    .scene_3d .axis_z{
        fill: blue;
    }
    .scene_bar, .height_row, .limits{
        position: relative;
    }
    .scene_bar{
        display: flex;
        gap: 5px;
        padding: 3px 4px 0px;
    }
    .material{
        width: 40px;
        margin-right: 5px;
    }
    .pick{
        display: grid;
        place-items: center;
        width: 30px;
        height: 30px;
    }
    .pick svg{
        width: 24px;
        height: 24px;
    }
    .pick.on{
        border: 1px solid blue;
        background-color: #555;
    }
    .pick_sep{
        width: 3px;
        height: 14px;
        margin-top: 5px;
        border-right: 1px solid transparent;
        background-color: white;
        background-clip: padding-box;
    }
    .grow{
        flex: 1;
    }
    .square{
        width: 30px;
    }
    .height_row{
        flex: 1;
        display: flex;
        gap: 54px;
        padding: 8px 9px 12px;
        font-size: 13px;
        line-height: 14px;
    }
    .height_row ul{
        display: flex;
        flex-direction: column;
        gap: 85px;
        width: 30px;
    }
    .height_row li{
        display: flex;
        align-items: center;
        gap: 2px;
        height: 14px;
    }
    .height_row li::before{
        content: "";
        width: 10px;
        height: 1px;
        background-color: #aaa;
    }
    .height_slider{
        display: grid;
        width: 20px;
        margin-top: 8px;
        background: linear-gradient(red, red) center / 10px 100% no-repeat;
    }
    .height_slider input{
        appearance: none;
        grid-area: 1 / 1;
        writing-mode: vertical-lr;
        direction: rtl;
        width: 20px;
        height: 100%;
        pointer-events: none;
    }
    .height_slider .high{
        height: calc(100% - 15px);
    }
    .height_slider input::-webkit-slider-thumb{
        appearance: none;
        width: 20px;
        height: 17px;
        border: 1px solid #bbb;
        border-radius: 2px;
        background: linear-gradient(#555, #555) center / 10px 1px no-repeat #f2efee;
        pointer-events: auto;
    }
    .limits{
        display: grid;
        grid-template-columns: 44px 96px;
        row-gap: 5px;
        align-items: center;
        padding: 0px 9px 9px;
        font-size: 13px;
        font-weight: 500;
        white-space: nowrap;
    }
    .spin{
        display: flex;
        align-items: center;
        height: 30px;
        padding: 0px 8px;
        border: 2px solid #808080;
        background-color: black;
        font-size: 15px;
        font-weight: normal;
    }
    .spin input{
        flex: 1;
        width: 20px;
        padding-bottom: 3px;
        text-align: center;
    }
    .spin svg{
        width: 8px;
        height: 14px;
        fill: none;
        stroke: white;
    }
    .select_box{
        display: flex;
        align-items: center;
        height: 25px;
        padding-right: 8px;
        border: 2px solid #808080;
        background-color: #1c1c1c;
        font-weight: normal;
    }
    .select_box select{
        appearance: none;
        flex: 1;
        padding: 0px 0px 2px 10px;
    }
    .select_box svg{
        width: 12px;
        height: 8px;
        fill: none;
        stroke: #aaa;
        pointer-events: none;
    }
    .digits{
        height: 30px;
        background: none;
        font-size: 15px;
    }

    .draw_bar{
        display: flex;
        align-items: center;
        justify-content: space-between;
        height: 51px;
        padding: 0px 20px 0px 11px;
        background-color: #808080;
    }
    .draw_modes{
        display: flex;
        font-weight: 500;
    }
    .draw_modes button{
        width: 80px;
        height: 30px;
        background-color: #999;
    }
    .draw_modes .active{
        background-color: #4064ff;
    }
    .size_row{
        display: flex;
        align-items: center;
        gap: 10px;
        padding-left: 8px;
    }
    .size_row svg{
        width: 18px;
        height: 18px;
        fill: none;
        stroke: black;
        stroke-width: 2;
    }
    .size_row input{
        appearance: none;
        width: 188px;
        height: 24px;
        background: linear-gradient(#aaa, #aaa) center / 100% 2px no-repeat;
    }
    .size_row input::-webkit-slider-thumb{
        appearance: none;
        width: 8px;
        height: 24px;
        border-radius: 3px;
        background-color: #4064ff;
    }
    .switches, .switches label{
        display: flex;
        align-items: center;
        gap: 9px;
        color: black;
        font-size: 12px;
    }
    .switches input{
        appearance: none;
        display: flex;
        align-items: center;
        width: 44px;
        height: 21px;
        padding-left: 3px;
        border: 2px solid #e0e0e0;
        border-radius: 11px;
    }
    .switches input::before{
        content: "";
        width: 10px;
        height: 11px;
        border-radius: 6px;
        background-color: #e8e8e8;
    }
    .switches input:checked::before{
        margin-left: 23px;
    }
    .switches input:disabled{
        opacity: 0.2;
    }

    .result_head{
        display: flex;
        align-items: center;
        gap: 12px;
        margin: 12px 2px 6px 8px;
        height: 32px;
        font-size: 17px;
        color: #333;
    }
    .result_head .active{
        color: white;
        font-weight: 500;
    }
    .result_head .save_table{
        width: 60px;
        height: 32px;
        margin-left: auto;
        color: white;
        font-size: 13px;
    }
    .result_box{
        flex: 295;
        margin: 0px 2px;
        padding: 11px 27px 0px 11px;
        border: 1px solid #808080;
    }
    table{
        width: 100%;
        table-layout: fixed;
        border-collapse: collapse;
        background-color: #666;
        font-size: 12px;
    }
    .c_name{
        width: 30%;
    }
    .c_type{
        width: 20%;
    }
    .c_used{
        width: 10%;
    }
    th, td{
        height: 28px;
        padding: 0px;
        border: 1px solid #8a8a8a;
        text-align: left;
        line-height: 18px;
    }
    th{
        height: 32px;
        font-size: 11px;
        font-weight: normal;
        text-align: center;
    }
    tr.selected{
        background-color: #3c8ae6;
    }
    .level_1{
        padding-left: 19px;
        position: relative;
    }
    .level_2{
        padding-left: 39px;
    }
    .used{
        font-family: "Liberation Sans", sans-serif;
        text-align: center;
    }
    .twisty{
        position: absolute;
        left: 0px;
        top: 10px;
        width: 7px;
        height: 7px;
        fill: white;
    }

    footer{
        height: 22px;
        padding: 0px 20px;
        background-color: #1f1f1f;
        font-weight: 500;
        text-align: right;
    }

    .dialog{
        position: absolute;
        z-index: 10;
        top: 245px;
        left: 410px;
        width: 900px;
        background-color: #2b2b2b;
        font-size: 13px;
        line-height: 18px;
    }
    .dialog_head{
        display: flex;
        align-items: center;
        height: 35px;
        padding-right: 3px;
        background-color: #4064ff;
    }
    .dialog_head h1{
        flex: 1;
        padding-left: 33px;
        font-size: 27px;
        line-height: 35px;
        text-align: center;
    }
    .dialog_head button{
        display: grid;
        place-items: center;
        width: 30px;
        height: 30px;
        background-color: #c00000;
    }
    .dialog_head svg{
        width: 12px;
        height: 12px;
        fill: white;
        stroke: #c00000;
    }
    .dialog_body{
        padding: 0px 10px 19px;
    }
    .dialog_tabs{
        display: grid;
        grid-template-columns: 2fr 1fr;
        height: 42px;
    }
    .dialog_tabs button{
        padding: 2px 0px 0px 12px;
        color: #555;
        text-align: left;
    }
    .dialog_tabs .active{
        color: white;
        font-weight: bold;
    }
    .frame{
        border: 1px solid #808080;
    }
    .form{
        display: grid;
        grid-template-columns: 285px 1fr;
        grid-auto-rows: min-content;
        row-gap: 5px;
        align-items: center;
        min-height: 362px;
        padding: 4px;
    }
    .field{
        height: 25px;
        padding: 0px 8px 3px;
        border: 2px solid #808080;
        background-color: black;
    }
    .label_top{
        align-self: start;
        line-height: 16px;
    }
    .size_tools{
        display: flex;
        gap: 3px;
    }
    .size_tools button{
        width: 25px;
        height: 25px;
        background-color: #555;
    }
    .size_tools label{
        margin: 0px 7px 0px 17px;
    }
    .size_tools .field{
        width: 50px;
        padding-left: 11px;
    }
    .size_tools .resize{
        width: 87px;
        margin-left: 2px;
    }
    .items{
        grid-column: 2;
        display: flex;
        flex-direction: column;
        gap: 5px;
        height: 170px;
        background-color: black;
    }
    .items li{
        display: grid;
        grid-template-columns: 100px 15px 1fr 30px 25px;
        column-gap: 5px;
        height: 25px;
    }
    .items .field{
        padding-left: 10px;
    }
    .items li span{
        line-height: 16px;
    }
    .items .selected{
        background: linear-gradient(green, green) top / 100% 2px no-repeat, linear-gradient(green, green) bottom / 100% 2px no-repeat, linear-gradient(green, green) right / 2px 100% no-repeat;
    }
    .source, .link{
        background-color: #333;
    }
    .selected .source, .selected .link{
        border-top: 2px solid #339933;
        border-bottom: 2px solid #339933;
    }
    .link{
        display: grid;
        place-items: center;
        color: #666;
    }
    .link svg{
        width: 13px;
        height: 13px;
    }
    .actions{
        display: flex;
        justify-content: flex-end;
        gap: 5px;
        padding-top: 5px;
    }
    .actions button{
        display: flex;
        align-items: center;
        justify-content: center;
        gap: 14px;
        width: 75px;
        height: 22px;
        background-color: #555;
        font-size: 10px;
    }
    .actions svg{
        width: 13px;
        height: 13px;
    }
    .desc_head{
        display: flex;
        justify-content: space-between;
        padding: 12px 0px 4px 12px;
    }
    .desc_head label{
        padding-top: 2px;
    }
    .desc{
        padding: 11px;
    }
    textarea{
        display: block;
        width: 100%;
        height: 98px;
        padding: 2px 10px;
        border: 2px solid #808080;
        background-color: black;
        resize: none;
    }
</style>
